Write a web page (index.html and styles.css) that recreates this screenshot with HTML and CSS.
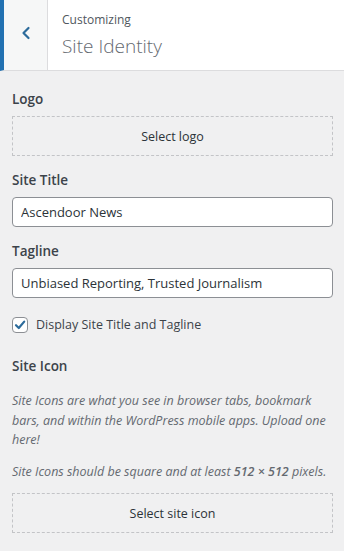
FILE: index.html
```html
<!DOCTYPE html>
<html lang="en">

<head>
    <meta charset="UTF-8">
    <meta name="viewport" content="width=device-width, initial-scale=1.0">
    <title>Customizing Site Identity</title>
    <link rel="stylesheet" href="styles.css">
</head>

<body>
    <div class="panel-header">
        <button class="back-btn" aria-label="Back">
            <svg width="12" height="14" viewBox="0 0 12 14">
                <path d="M8.5 2 L3.5 7 L8.5 12" fill="none" stroke="#2c6b9b" stroke-width="2.2" stroke-linecap="round" stroke-linejoin="round" />
            </svg>
        </button>
        <div class="header-titles">
            <span class="header-sub">Customizing</span>
            <h1 class="header-title">Site Identity</h1>
        </div>
    </div>

    <div class="controls">
        <div class="control">
            <span class="control-label">Logo</span>
            <button class="upload-btn">Select logo</button>
        </div>

        <div class="control">
            <span class="control-label">Site Title</span>
            <input class="text-input" type="text" value="Ascendoor News">
        </div>

        <div class="control">
            <span class="control-label">Tagline</span>
            <input class="text-input" type="text" value="Unbiased Reporting, Trusted Journalism">
        </div>

        <label class="check-row">
            <span class="checkbox">
                <svg width="12" height="12" viewBox="0 0 12 12">
                    <path d="M2 6.2 L4.8 9 L10.2 2.6" fill="none" stroke="#2c6b9b" stroke-width="2.2" stroke-linecap="round" stroke-linejoin="round" />
                </svg>
            </span>
            Display Site Title and Tagline
        </label>

        <div class="control">
            <span class="control-label">Site Icon</span>
            <p class="description first">Site Icons are what you see in browser tabs, bookmark bars, and within the WordPress mobile apps. Upload one here!</p>
            <p class="description">Site Icons should be square and at least <strong>512 × 512</strong> pixels.</p>
            <button class="upload-btn">Select site icon</button>
        </div>
    </div>
</body>

</html>
```

FILE: styles.css
```css
* {
    margin: 0;
    padding: 0;
    box-sizing: border-box;
}

body,
html {
    height: 100%;
    overflow: hidden;
}

body {
    background: #f0f0f1;
    font-family: "Open Sans", "Noto Sans", sans-serif;
    font-size: 13px;
    color: #3c434a;
}

.panel-header {
    display: flex;
    height: 71px;
    background: #fff;
    border-left: 4px solid #2271b1;
    border-bottom: 1px solid #dcdcde;
}

.back-btn {
    width: 44px;
    height: 70px;
    border: none;
    border-right: 1px solid #dcdcde;
    background: #f6f7f7;
    display: flex;
    align-items: center;
    justify-content: center;
    padding-bottom: 4px;
}

.header-titles {
    display: flex;
    flex-direction: column;
    padding: 11px 0 0 14px;
}

.header-sub {
    font-size: 12px;
    line-height: 18px;
    color: #50575e;
}

.header-title {
    font-size: 19px;
    font-weight: 300;
    line-height: 28px;
    color: #646970;
    margin-top: 3px;
}

.controls {
    display: flex;
    flex-direction: column;
    gap: 14px;
    padding: 18px 11px 0 12px;
}

.control {
    display: flex;
    flex-direction: column;
}

.control-label {
    font-size: 13.5px;
    font-weight: 600;
    line-height: 20px;
    color: #3c434a;
    margin-bottom: 7px;
}

.upload-btn {
    height: 40px;
    border: 1px dashed #c3c4c7;
    background: transparent;
    font-family: inherit;
    font-size: 12.5px;
    color: #2c3338;
}

.text-input {
    height: 30px;
    padding: 0 8px;
    border: 1px solid #8c8f94;
    border-radius: 4px;
    background: #fff;
    font-family: inherit;
    font-size: 13px;
    color: #2c3338;
}

.check-row {
    display: flex;
    align-items: center;
    gap: 8px;
    font-size: 12.5px;
    line-height: 16px;
    color: #3c434a;
    margin-top: 5px;
    margin-bottom: 9px;
}

.checkbox {
    width: 16px;
    height: 16px;
    border: 1px solid #8c8f94;
    border-radius: 4px;
    background: #fff;
    display: flex;
    align-items: center;
    justify-content: center;
}

.description {
    font-style: italic;
    font-size: 12.5px;
    line-height: 19.5px;
    color: #646970;
    margin-bottom: 12px;
}

.description.first {
    margin-top: 8px;
}

.description strong {
    font-weight: 600;
}
```
